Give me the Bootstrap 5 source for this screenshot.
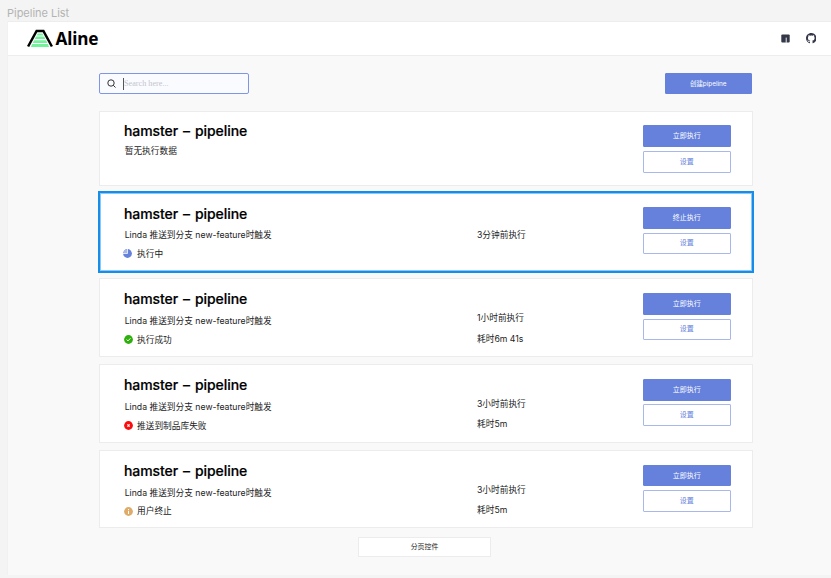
<!DOCTYPE html>
<html lang="zh-CN">
<head>
<meta charset="utf-8">
<meta name="viewport" content="width=device-width, initial-scale=1">
<title>Pipeline List</title>
<link href="https://cdn.jsdelivr.net/npm/bootstrap@5.3.0/dist/css/bootstrap.min.css" rel="stylesheet">
<style>
body{background:#f4f4f4;font-family:Inter,"Noto Sans CJK SC",sans-serif;font-size:8.7px;color:#222;width:831px;height:578px;overflow:hidden}
.frame-name{height:22px;padding:6px 0 0 7px;font-size:11px;line-height:14px;color:#b3b3b3;letter-spacing:-.02px}
.frame-body{margin-left:7px;height:554px;background:#f9f9f9;border-left:1px solid #f1f1f1}
.topbar{height:33px;margin-top:-1px;box-sizing:content-box;background:#fff;border:solid #ededed;border-width:1px 0;padding:0 15px 0 18.5px}
.brand{font:700 17.2px/31px "Noto Sans",sans-serif;color:#000;letter-spacing:-.15px;margin:-1px 0 0 2px}
.page{width:654px;margin-left:91px;padding-top:17px}
.tools{height:21px;margin-bottom:17px}
.search{width:150px;height:21px;border:1px solid #7f96e4;border-radius:2px;background:#fafbff;padding-left:6.5px}
.search input{width:110px;height:12px;border:0;border-left:1px solid #555;outline:0;background:transparent;padding:0;margin-left:7.5px;font:8.2px/12px "Liberation Serif",serif}
.search input::placeholder{color:#c2c4ce;opacity:1}
.act{--bs-btn-padding-x:0;--bs-btn-padding-y:0;--bs-btn-font-size:7px;--bs-btn-border-radius:1px;--bs-btn-line-height:18px;width:87.5px;height:21.5px;--bs-btn-color:#fff;--bs-btn-bg:#6581dc;--bs-btn-border-color:#6581dc;--bs-btn-hover-bg:#5571cc;--bs-btn-hover-color:#fff}
.tools .act{margin-right:1px;height:21px;--bs-btn-font-size:6.4px}
.act-line{--bs-btn-color:#6581dc;--bs-btn-bg:#fff;--bs-btn-border-color:#a9b8ea}
.pipe{display:grid;grid-template-columns:353px 166px 88px;height:78.7px;margin-bottom:7px;padding:0 0 0 24px;background:#fff;border:1px solid #ececec}
.pipe h2{font-size:14px;line-height:20px;font-weight:500;color:#000;margin:10px 0 0;letter-spacing:-.07px;word-spacing:1.3px;-webkit-text-stroke:.2px #000}
.pipe p{margin:0;line-height:14px;white-space:nowrap}
.desc{margin:5px 0 0 .7px!important}
.status{height:14px;margin-top:4.6px;gap:4px;line-height:14px}
.when{padding-top:31.8px}
.when p+p{margin-top:6.4px}
.acts{padding-top:14px;gap:3.8px}
.idle{height:75px;margin-bottom:5px}
.idle h2{margin-top:9px}
.idle .desc{margin-top:3px!important}
.idle .acts{padding-top:13px;gap:4.5px}
.picked{height:82px;margin:0 -1px 5.4px -1px;border:2px solid #168ee9;outline:1px solid #8cc8f5;outline-offset:-3px}
.picked h2{margin-top:11px}
.picked .desc{margin-top:4px!important}
.picked .when{padding-top:35px}
.picked .acts{gap:4.2px}
.picked .status{margin-left:-1px;gap:5px}
.pager{width:133px;height:20px;margin:8.6px auto 0 259px;background:#fff;border:1px solid #ececec;font-size:6.9px;line-height:18px;text-align:center}
</style>
</head>
<body>
<div class="frame-name">Pipeline List</div>
<div class="frame-body">
<header class="topbar d-flex align-items-center justify-content-between">
<div class="d-flex align-items-center">
<svg width="27" height="19" viewBox="0 0 27 19"><path d="M10.7 4.4h4.7l1 2H9.8zM9 7.6h8.3l1 2.4H7.8zM7 11.2h12.2l1.1 2.7H5.8zM5.1 15.1h15.8l1.2 3H3.9z" fill="#72f39b"/><path d="M1.1 17.5 9.6 2h6.8l8.5 15.5" fill="none" stroke="#000" stroke-width="2.5"/></svg>
<span class="brand">Aline</span>
</div>
<div class="d-flex align-items-center" style="gap:16px">
<svg width="9" height="9" viewBox="0 0 9 9"><rect x=".3" y=".6" width="8.4" height="8" rx="1" fill="#343747"/><path d="M5.2 3.6v5.2" stroke="#fff" stroke-width=".9"/></svg>
<svg width="10.5" height="10.5" viewBox="0 0 16 16" fill="#343747"><path d="M8 0C3.58 0 0 3.58 0 8c0 3.54 2.29 6.53 5.47 7.59.4.07.55-.17.55-.38 0-.19-.01-.82-.01-1.49-2.01.37-2.53-.49-2.69-.94-.09-.23-.48-.94-.82-1.13-.28-.15-.68-.52-.01-.53.63-.01 1.08.58 1.23.82.72 1.21 1.87.87 2.33.66.07-.52.28-.87.51-1.07-1.78-.2-3.64-.89-3.64-3.95 0-.87.31-1.59.82-2.15-.08-.2-.36-1.02.08-2.12 0 0 .67-.21 2.2.82A7.6 7.6 0 0 1 8 3.86c.68 0 1.36.09 2 .27 1.53-1.04 2.2-.82 2.2-.82.44 1.1.16 1.92.08 2.12.51.56.82 1.27.82 2.15 0 3.07-1.87 3.75-3.65 3.95.29.25.54.73.54 1.48 0 1.07-.01 1.93-.01 2.2 0 .21.15.46.55.38A8 8 0 0 0 16 8c0-4.42-3.58-8-8-8z"/></svg>
</div>
</header>
<main class="page">
<div class="tools d-flex justify-content-between">
<div class="search d-flex align-items-center"><svg width="9" height="9" viewBox="0 0 9 9" fill="none" stroke="#333" stroke-width="1"><circle cx="4" cy="4" r="3.2"/><path d="m6.3 6.3 2.2 2.2"/></svg><input type="text" placeholder="Search here..." aria-label="Search"></div>
<button class="btn act">创建pipeline</button>
</div>
<section class="pipe idle">
<div><h2>hamster – pipeline</h2><p class="desc">暂无执行数据</p></div>
<div></div>
<div class="acts d-flex flex-column"><button class="btn act">立即执行</button><button class="btn act act-line">设置</button></div>
</section>
<section class="pipe picked">
<div><h2>hamster – pipeline</h2><p class="desc">Linda 推送到分支 new-feature时触发</p><div class="status d-flex align-items-center"><svg width="9" height="9" viewBox="0 0 9 9"><circle cx="4.5" cy="4.5" r="4.4" fill="#6581dc"/><path d="M4.5 0v4.5H0" fill="none" stroke="#fff" stroke-width=".8"/><path d="M4 .3V4H.3A4.2 4.2 0 0 1 4 .3z" fill="#a9b8ec"/></svg><span>执行中</span></div></div>
<div class="when"><p>3分钟前执行</p></div>
<div class="acts d-flex flex-column"><button class="btn act">终止执行</button><button class="btn act act-line">设置</button></div>
</section>
<section class="pipe">
<div><h2>hamster – pipeline</h2><p class="desc">Linda 推送到分支 new-feature时触发</p><div class="status d-flex align-items-center"><svg width="9" height="9" viewBox="0 0 9 9"><circle cx="4.5" cy="4.5" r="4.4" fill="#2daf0c"/><path d="m2.6 4.6 1.4 1.3 2.4-2.6" fill="none" stroke="#fff"/></svg><span>执行成功</span></div></div>
<div class="when"><p>1小时前执行</p><p>耗时6m 41s</p></div>
<div class="acts d-flex flex-column"><button class="btn act">立即执行</button><button class="btn act act-line">设置</button></div>
</section>
<section class="pipe">
<div><h2>hamster – pipeline</h2><p class="desc">Linda 推送到分支 new-feature时触发</p><div class="status d-flex align-items-center"><svg width="9" height="9" viewBox="0 0 9 9"><circle cx="4.5" cy="4.5" r="4.4" fill="#fb0d0d"/><path d="m3.4 3.4 2.2 2.2m0-2.2L3.4 5.6" stroke="#fff" stroke-width="1.2"/></svg><span>推送到制品库失败</span></div></div>
<div class="when"><p>3小时前执行</p><p>耗时5m</p></div>
<div class="acts d-flex flex-column"><button class="btn act">立即执行</button><button class="btn act act-line">设置</button></div>
</section>
<section class="pipe">
<div><h2>hamster – pipeline</h2><p class="desc">Linda 推送到分支 new-feature时触发</p><div class="status d-flex align-items-center"><svg width="9" height="9" viewBox="0 0 9 9"><circle cx="4.5" cy="4.5" r="4.4" fill="#dfab6b"/><path d="M4.5 2v1.1m0 .8V7" stroke="#fff"/></svg><span>用户终止</span></div></div>
<div class="when"><p>3小时前执行</p><p>耗时5m</p></div>
<div class="acts d-flex flex-column"><button class="btn act">立即执行</button><button class="btn act act-line">设置</button></div>
</section>
<div class="pager">分页控件</div>
</main>
</div>
<script src="https://cdn.jsdelivr.net/npm/bootstrap@5.3.0/dist/js/bootstrap.bundle.min.js"></script>
</body>
</html>
